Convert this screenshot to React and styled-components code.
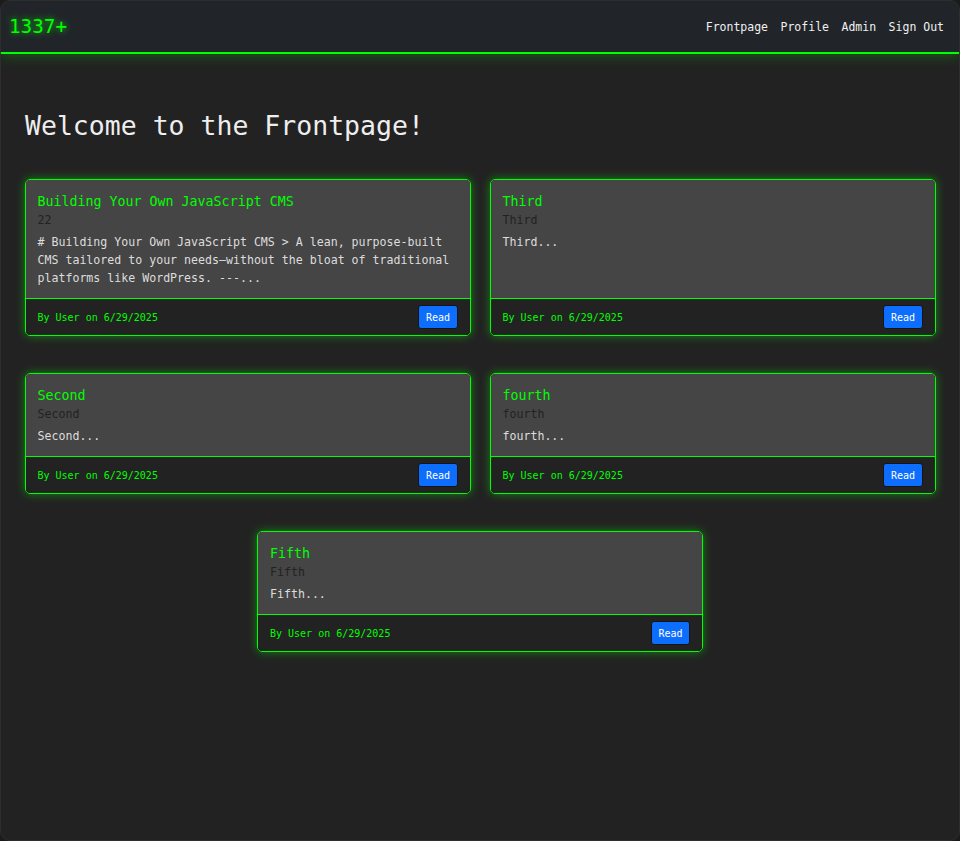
import React from 'react';
import styled, { createGlobalStyle } from 'styled-components';

const GlobalStyle = createGlobalStyle`
  html, body {
    margin: 0;
    padding: 0;
    background: #1b1b1b;
  }
  * {
    box-sizing: border-box;
  }
`;

const posts = [
  {
    id: 1,
    title: 'Building Your Own JavaScript CMS',
    subtitle: '22',
    excerpt:
      '# Building Your Own JavaScript CMS > A lean, purpose-built CMS tailored to your needs—without the bloat of traditional platforms like WordPress. ---...',
  },
  { id: 2, title: 'Third', subtitle: 'Third', excerpt: 'Third...' },
  { id: 3, title: 'Second', subtitle: 'Second', excerpt: 'Second...' },
  { id: 4, title: 'fourth', subtitle: 'fourth', excerpt: 'fourth...' },
  { id: 5, title: 'Fifth', subtitle: 'Fifth', excerpt: 'Fifth...' },
];

const navLinks = ['Frontpage', 'Profile', 'Admin', 'Sign Out'];

export default function App() {
  return (
    <>
      <GlobalStyle />
      <Page>
        <Navbar>
          <Logo>1337+</Logo>
          <NavList>
            {navLinks.map((link) => (
              <NavLink key={link} href='#'>
                {link}
              </NavLink>
            ))}
          </NavList>
        </Navbar>
        <Main>
          <Heading>Welcome to the Frontpage!</Heading>
          <CardGrid>
            {posts.map((post) => (
              <Card key={post.id}>
                <CardBody>
                  <CardTitle>{post.title}</CardTitle>
                  <CardSubtitle>{post.subtitle}</CardSubtitle>
                  <CardText>{post.excerpt}</CardText>
                </CardBody>
                <CardFooter>
                  <Byline>By User on 6/29/2025</Byline>
                  <ReadButton type='button'>Read</ReadButton>
                </CardFooter>
              </Card>
            ))}
          </CardGrid>
        </Main>
      </Page>
    </>
  );
}

const Page = styled.div`
  min-height: 841px;
  background: #222222;
  border: 1px solid #2e2e2e;
  border-radius: 10px;
  overflow: hidden;
  font-family: 'DejaVu Sans Mono', 'Liberation Mono', monospace;
`;

const Navbar = styled.nav`
  height: 53px;
  display: flex;
  align-items: center;
  justify-content: space-between;
  padding: 0 15px 0 8px;
  background: #212529;
  border-bottom: 2px solid #00ff00;
  box-shadow: 0 2px 12px rgba(0, 255, 0, 0.25);
`;

const Logo = styled.span`
  font-size: 19.3px;
  color: #00ff00;
  text-shadow: 0 0 6px rgba(0, 255, 0, 0.8);
`;

const NavList = styled.div`
  display: flex;
  gap: 12.5px;
`;

const NavLink = styled.a`
  font-size: 11.5px;
  color: #f0f0f0;
  text-decoration: none;
`;

const Main = styled.main`
  padding: 54px 23px 40px;
`;

const Heading = styled.h1`
  margin: 0 0 35px;
  padding-left: 1px;
  font-size: 26.5px;
  font-weight: normal;
  line-height: 36px;
  color: #eeeeee;
`;

const CardGrid = styled.section`
  display: flex;
  flex-wrap: wrap;
  justify-content: center;
  gap: 37px 19px;
`;

const Card = styled.article`
  width: 446px;
  display: flex;
  flex-direction: column;
  border: 1px solid #00ff00;
  border-radius: 5px;
  overflow: hidden;
  box-shadow: 0 0 10px rgba(0, 255, 0, 0.45);
`;

const CardBody = styled.div`
  flex: 1;
  padding: 14px 12px 11px;
  background: #454545;
`;

const CardTitle = styled.h5`
  margin: 0 0 2px;
  font-size: 13.3px;
  font-weight: normal;
  line-height: 16px;
  color: #00ff00;
`;

const CardSubtitle = styled.h6`
  margin: 0 0 4px;
  font-size: 11.6px;
  font-weight: normal;
  line-height: 17px;
  color: #222222;
`;

const CardText = styled.p`
  margin: 0;
  font-size: 11.6px;
  line-height: 18px;
  color: #dddddd;
`;

const CardFooter = styled.div`
  display: flex;
  align-items: center;
  justify-content: space-between;
  height: 37px;
  padding: 0 12px;
  background: #222222;
  border-top: 1px solid #00ff00;
`;

const Byline = styled.small`
  font-size: 10px;
  color: #00ff00;
`;

const ReadButton = styled.button`
  height: 24px;
  padding: 0 6.5px;
  font-family: inherit;
  font-size: 10px;
  color: #ffffff;
  background-color: #0d6efd;
  border: 1px solid #151515;
  border-radius: 3px;
  cursor: pointer;
`;
